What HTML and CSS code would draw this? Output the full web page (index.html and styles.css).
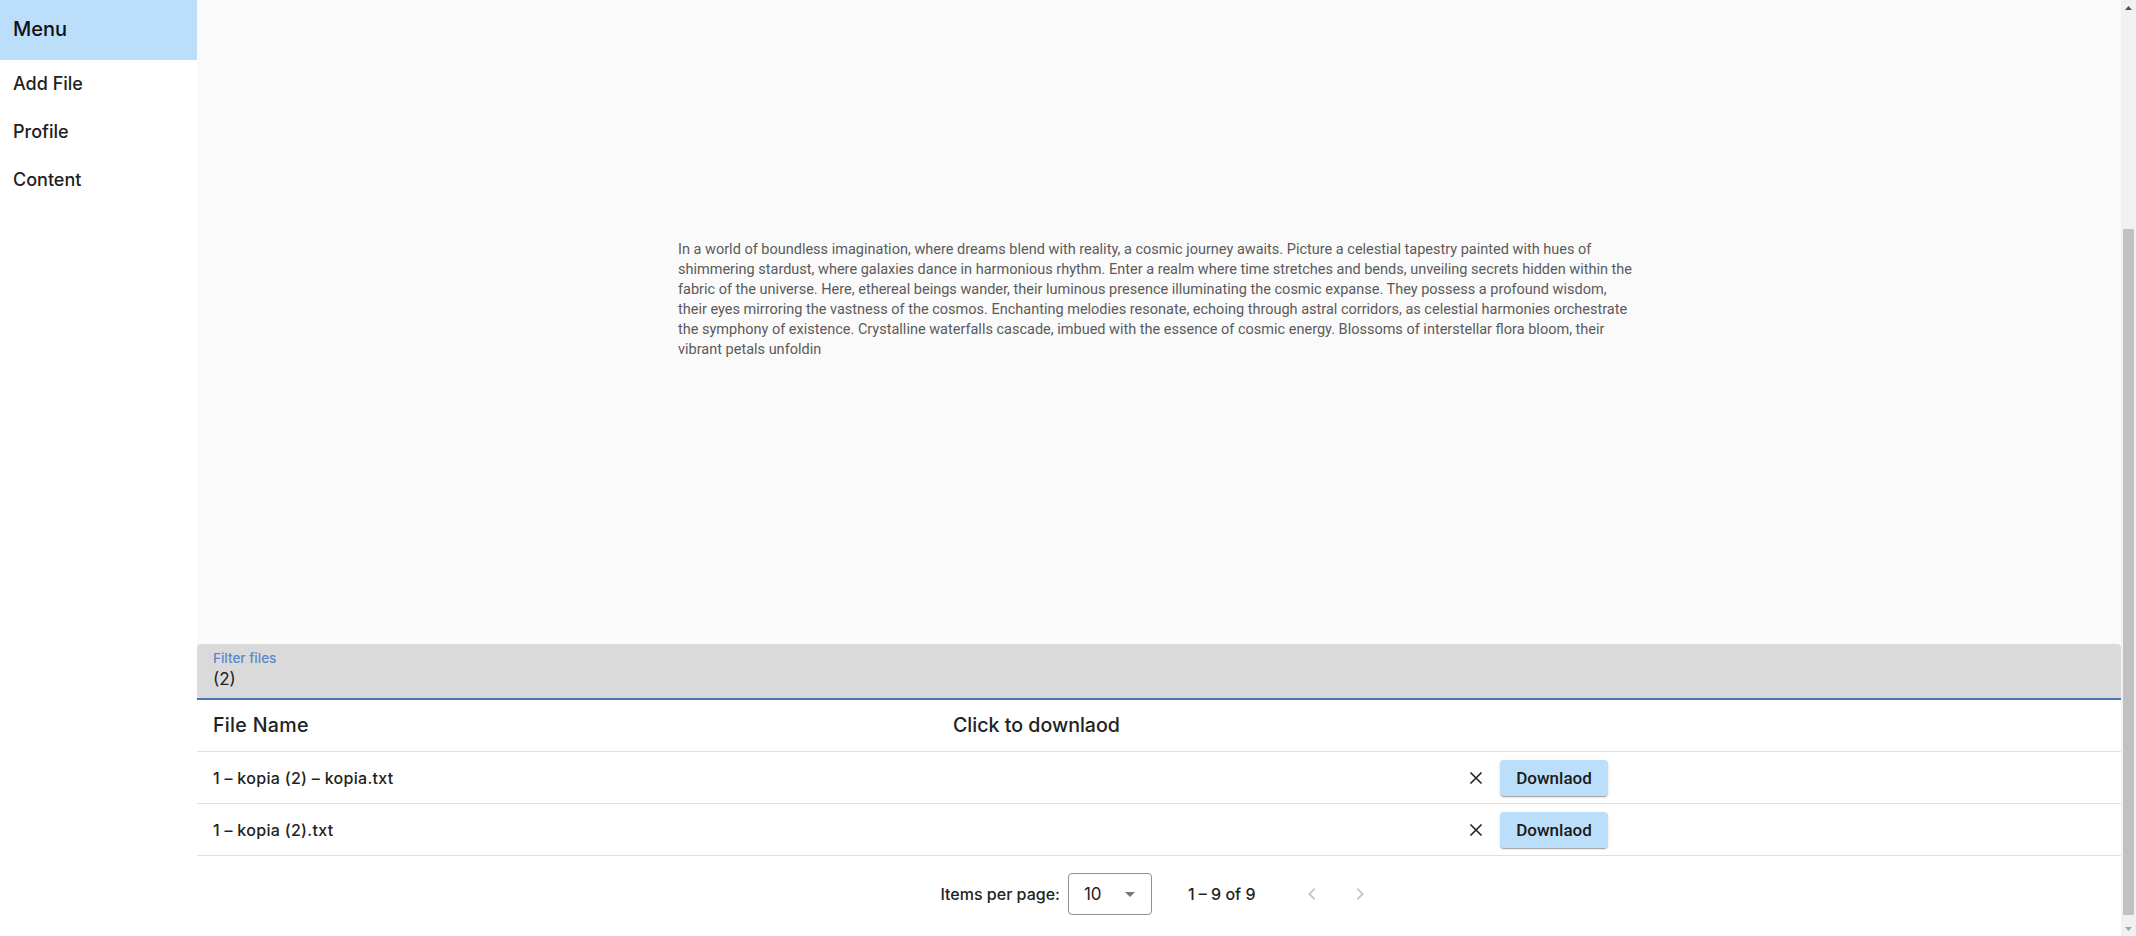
FILE: index.html
```html
<!DOCTYPE html>
<html lang="en">
<head>
<meta charset="utf-8">
<title>Files</title>
<link rel="stylesheet" href="styles.css">
</head>
<body>
<div class="app">
  <aside class="sidenav">
    <div class="sidenav-head">Menu</div>
    <nav class="nav-list">
      <a class="nav-item">Add File</a>
      <a class="nav-item">Profile</a>
      <a class="nav-item">Content</a>
    </nav>
  </aside>
  <main class="content">
    <div class="content-inner">
      <section class="reader">
        <p class="reader-text">In a world of boundless imagination, where dreams blend with reality, a cosmic journey awaits. Picture a celestial tapestry painted with hues of shimmering stardust, where galaxies dance in harmonious rhythm. Enter a realm where time stretches and bends, unveiling secrets hidden within the fabric of the universe. Here, ethereal beings wander, their luminous presence illuminating the cosmic expanse. They possess a profound wisdom, their eyes mirroring the vastness of the cosmos. Enchanting melodies resonate, echoing through astral corridors, as celestial harmonies orchestrate the symphony of existence. Crystalline waterfalls cascade, imbued with the essence of cosmic energy. Blossoms of interstellar flora bloom, their vibrant petals unfoldin</p>
      </section>
      <div class="filter">
        <span class="filter-label">Filter files</span>
        <span class="filter-value">(2)</span>
      </div>
      <div class="table">
        <div class="row row-head">
          <div class="cell cell-name">File Name</div>
          <div class="cell cell-action">Click to downlaod</div>
        </div>
        <div class="row">
          <div class="cell cell-name">1 – kopia (2) – kopia.txt</div>
          <div class="cell cell-action">
            <div class="actions">
              <span class="icon-btn"><svg width="24" height="24" viewBox="0 0 24 24"><path d="M6.5 6.5 L17.5 17.5 M17.5 6.5 L6.5 17.5" stroke="#222" stroke-width="1.6" fill="none"/></svg></span>
              <span class="dl-btn">Downlaod</span>
            </div>
          </div>
        </div>
        <div class="row">
          <div class="cell cell-name">1 – kopia (2).txt</div>
          <div class="cell cell-action">
            <div class="actions">
              <span class="icon-btn"><svg width="24" height="24" viewBox="0 0 24 24"><path d="M6.5 6.5 L17.5 17.5 M17.5 6.5 L6.5 17.5" stroke="#222" stroke-width="1.6" fill="none"/></svg></span>
              <span class="dl-btn">Downlaod</span>
            </div>
          </div>
        </div>
      </div>
      <div class="paginator">
        <span class="pg-label">Items per page:</span>
        <div class="pg-select">
          <span class="pg-select-value">10</span>
          <svg class="pg-arrow" width="10" height="5" viewBox="0 0 10 5"><path d="M0 0 L10 0 L5 5 Z" fill="#757575"/></svg>
        </div>
        <span class="pg-range">1 – 9 of 9</span>
        <span class="pg-btn"><svg width="24" height="24" viewBox="0 0 24 24"><path d="M15.4 7.4 L14 6 L8 12 L14 18 L15.4 16.6 L10.8 12 Z" fill="#c8c8c8"/></svg></span>
        <span class="pg-btn"><svg width="24" height="24" viewBox="0 0 24 24"><path d="M8.6 7.4 L10 6 L16 12 L10 18 L8.6 16.6 L13.2 12 Z" fill="#c8c8c8"/></svg></span>
      </div>
      <div class="bottom-space"></div>
    </div>
  </main>
  <div class="scrollbar" aria-hidden="true">
    <div class="sb-btn"><svg width="7" height="4" viewBox="0 0 7 4"><path d="M0 4 L3.5 0 L7 4 Z" fill="#505050"/></svg></div>
    <div class="sb-track"><div class="sb-thumb"></div></div>
    <div class="sb-btn"><svg width="7" height="4" viewBox="0 0 7 4"><path d="M0 0 L7 0 L3.5 4 Z" fill="#a3a3a3"/></svg></div>
  </div>
</div>
</body>
</html>
```

FILE: styles.css
```css
html, body {
  margin: 0;
  padding: 0;
  height: 100%;
  overflow: hidden;
}

body {
  font-family: Inter, "Noto Sans", sans-serif;
  color: rgba(0, 0, 0, 0.87);
  background: #fafafa;
}

.app {
  display: flex;
  height: 100vh;
}

.sidenav {
  width: 197px;
  flex: none;
  background: #ffffff;
  height: 100vh;
}

.sidenav-head {
  height: 60px;
  box-sizing: border-box;
  padding: 0 0 2px 13px;
  background: #bbdefb;
  display: flex;
  align-items: center;
  font-size: 20px;
  font-weight: 500;
  color: #111;
}

.nav-list {
  display: flex;
  flex-direction: column;
}

.nav-item {
  height: 48px;
  box-sizing: border-box;
  padding: 0 0 2px 13px;
  display: flex;
  align-items: center;
  font-size: 18px;
  font-weight: 500;
  color: #222;
}

.content {
  flex: 1;
  min-width: 0;
  height: 100vh;
  overflow-y: scroll;
  scrollbar-width: none;
  display: flex;
  flex-direction: column-reverse;
}

.content::-webkit-scrollbar {
  display: none;
}

.content-inner {
  display: flex;
  flex-direction: column;
  flex: none;
}

.reader {
  height: 940px;
  box-sizing: border-box;
  padding: 536px 5px 0 0;
  display: flex;
  justify-content: center;
}

.reader-text {
  margin: 0;
  width: 957px;
  font-family: Roboto, "Liberation Sans", sans-serif;
  font-size: 14.5px;
  line-height: 20px;
  color: #5a5a5a;
}

.filter {
  height: 56px;
  box-sizing: border-box;
  background: #dadada;
  border-radius: 4px 4px 0 0;
  border-bottom: 2px solid #4a74b6;
  padding: 5px 16px 0;
  display: flex;
  flex-direction: column;
}

.filter-label {
  font-size: 13.5px;
  line-height: 18px;
  color: #5b87c7;
  font-weight: 500;
}

.filter-value {
  font-size: 17px;
  line-height: 24px;
  color: #222;
}

.table {
  background: #ffffff;
}

.row {
  display: grid;
  grid-template-columns: 740px 1fr;
  height: 52px;
  box-sizing: border-box;
  border-bottom: 1px solid #e0e0e0;
  align-items: center;
}

.cell {
  padding-left: 16px;
}

.row-head .cell {
  font-size: 19.6px;
  font-weight: 500;
  color: #222;
  padding-bottom: 1px;
}

.cell-name {
  font-size: 16px;
  letter-spacing: 0.3px;
  font-weight: 500;
  color: #222;
}

.actions {
  display: flex;
  align-items: center;
  gap: 4px;
  padding-left: 503px;
}

.icon-btn {
  width: 40px;
  height: 40px;
  display: flex;
  align-items: center;
  justify-content: center;
}

.dl-btn {
  width: 108px;
  height: 36px;
  display: flex;
  align-items: center;
  justify-content: center;
  background: #bbdefb;
  border-radius: 4px;
  font-family: Roboto, "Liberation Sans", sans-serif;
  font-size: 17px;
  font-weight: 500;
  color: #1a1a1a;
  box-shadow: 0 2px 1px -1px rgba(0, 0, 0, 0.2), 0 1px 1px 0 rgba(0, 0, 0, 0.14), 0 1px 3px 0 rgba(0, 0, 0, 0.12);
}

.paginator {
  height: 76px;
  box-sizing: border-box;
  padding-left: 6px;
  background: #ffffff;
  display: flex;
  align-items: center;
  justify-content: center;
  font-size: 16px;
  font-weight: 500;
  color: #222;
}

.pg-label {
  margin-right: 8px;
}

.pg-select {
  width: 84px;
  height: 42px;
  box-sizing: border-box;
  border: 1px solid #8f8f8f;
  border-radius: 4px;
  display: flex;
  align-items: center;
  justify-content: space-between;
  padding: 0 16px 0 15px;
  font-size: 17px;
  font-weight: 400;
}

.pg-range {
  margin: 0 32px 0 36px;
}

.pg-btn {
  width: 48px;
  height: 48px;
  display: flex;
  align-items: center;
  justify-content: center;
}

.bottom-space {
  height: 4px;
  background: #ffffff;
}

.scrollbar {
  width: 15px;
  flex: none;
  height: 100vh;
  background: #f1f1f1;
  display: flex;
  flex-direction: column;
}

.sb-btn {
  height: 15px;
  flex: none;
  display: flex;
  align-items: center;
  justify-content: center;
}

.sb-track {
  flex: 1;
  box-sizing: border-box;
  padding: 214px 2px 6px;
  display: flex;
}

.sb-thumb {
  flex: 1;
  background: #c1c1c1;
}
```
